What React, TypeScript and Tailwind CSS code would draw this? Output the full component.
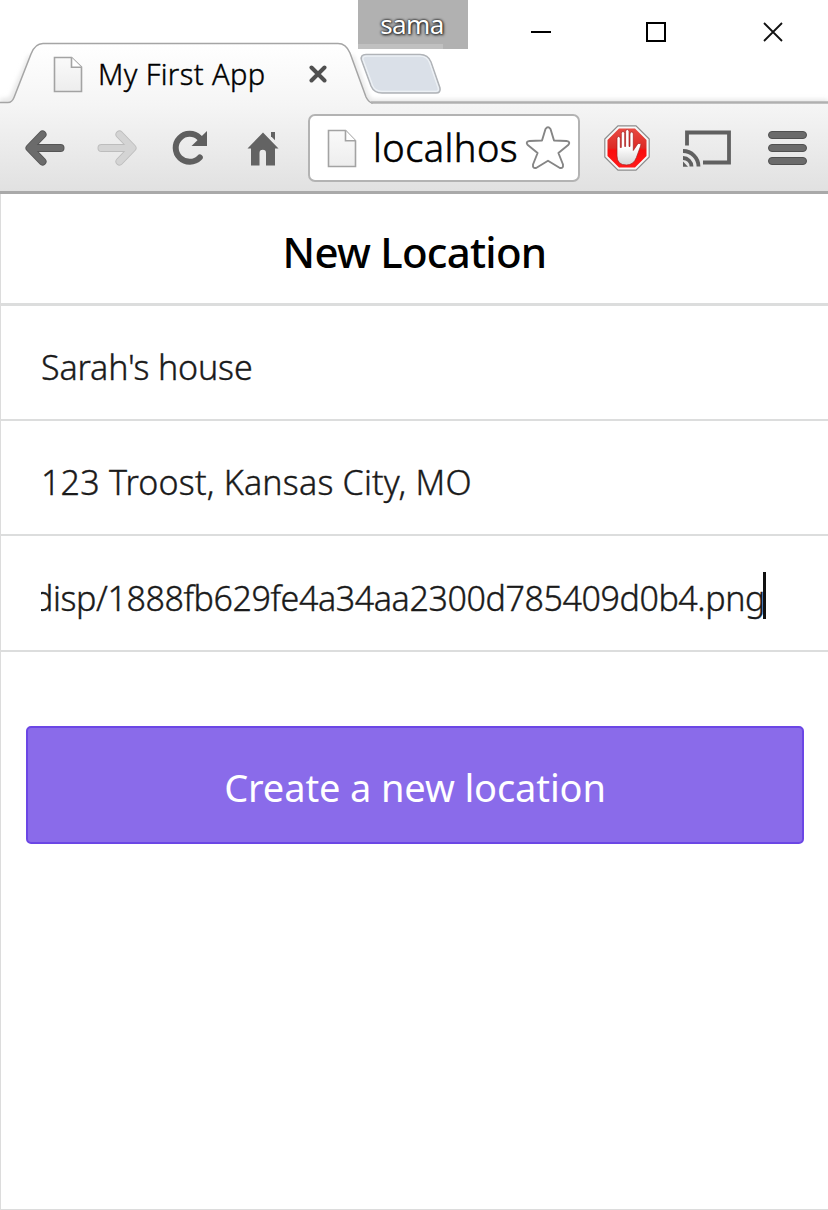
import React from "react";

function FileIcon({ className }: { className: string }) {
  return (
    <svg className={className} viewBox="0 0 30 38" preserveAspectRatio="none" fill="none">
      <defs>
        <linearGradient id="paper" x1="0" y1="0" x2="0" y2="1">
          <stop offset="0" stopColor="#fafafa" />
          <stop offset="1" stopColor="#ededed" />
        </linearGradient>
      </defs>
      <path d="M1.5 1.5H18.5L28.5 11.5V36.5H1.5Z" fill="url(#paper)" stroke="#a3a3a3" strokeWidth="1.6" />
      <path d="M18.5 1.5V11.5H28.5" fill="#fff" stroke="#a3a3a3" strokeWidth="1.6" />
    </svg>
  );
}

function ArrowIcon({ className, fill, stroke }: { className: string; fill: string; stroke: string }) {
  return (
    <svg className={className} viewBox="0 0 40 36" fill="none" strokeLinecap="round" strokeLinejoin="round">
      <path d="M17.5 4.5L4.5 18L17.5 31.5M5 18H35.5" stroke={stroke} strokeWidth="8" />
      <path d="M17.5 4.5L4.5 18L17.5 31.5M5 18H35.5" stroke={fill} strokeWidth="6.2" />
    </svg>
  );
}

function ReloadIcon() {
  return (
    <svg className="h-9 w-9" viewBox="0 0 36 36" fill="none">
      <path d="M27.5 7.8A14 14 0 1 0 27.8 27.5" stroke="#5f5f5f" strokeWidth="6" strokeLinecap="round" />
      <path d="M35 1V16H19.5Z" fill="#5f5f5f" />
    </svg>
  );
}

function HomeIcon() {
  return (
    <svg className="h-[35px] w-8" viewBox="0 0 32 35" fill="#636363">
      <path d="M16 1.5L0.5 17.5H4V34.5H12.5V22Q12.5 18.8 15.8 18.8Q19 18.8 19 22V34.5H28V17.5H31.5Z" />
      <path d="M24 1H28V9.3L24 5.2Z" />
    </svg>
  );
}

function StarIcon() {
  return (
    <svg className="h-[44px] w-[46px] shrink-0" viewBox="0 0 46 44" fill="#fff">
      <path
        d="M20.5 3Q23 -0.5 25.5 3L29 14.5L41.5 15Q46 15.8 43.2 19L33.4 27L38 38.5Q38.5 43 34.5 41.8L23 34.8L11.5 41.8Q7.5 43 8 38.5L12.6 27L2.8 19Q0 15.8 4.5 15L17 14.5Z"
        stroke="#858585"
        strokeWidth="1.9"
        strokeLinejoin="round"
      />
    </svg>
  );
}

function StopHandIcon() {
  return (
    <svg className="h-[46px] w-[46px]" viewBox="0 0 46 46">
      <defs>
        <linearGradient id="sign" x1="0" y1="0" x2="0" y2="1">
          <stop offset="0" stopColor="#e84a42" />
          <stop offset="0.5" stopColor="#dd2a25" />
          <stop offset="0.56" stopColor="#fa0d0d" />
          <stop offset="1" stopColor="#ff1a1a" />
        </linearGradient>
        <linearGradient id="palm" x1="0" y1="0" x2="0" y2="1">
          <stop offset="0.5" stopColor="#fff" />
          <stop offset="1" stopColor="#d5d5d5" />
        </linearGradient>
      </defs>
      <path d="M14 .8H32L45.2 14V32L32 45.2H14L.8 32V14Z" fill="#f8f8f8" stroke="#8c8c8c" strokeWidth="1.2" />
      <path d="M15 3.5H31L42.5 15V31L31 42.5H15L3.5 31V15Z" fill="url(#sign)" />
      <path
        d="M13 13.5Q13 11.5 14.6 11.5Q16.3 11.5 16.3 13.5V22.5H17.3V8.5Q17.3 6.5 19 6.5Q20.7 6.5 20.7 8.5V21.5H21.6V6.5Q21.6 4.5 23.3 4.5Q25 4.5 25 6.5V21.5H26V9Q26 7 27.7 7Q29.3 7 29.3 9V25.5L33.3 19.5Q34.3 18 36.2 18.6Q37.3 19.2 36.6 21L32.4 32.5Q29.5 40 22.5 40Q13 40 13 31Z"
        fill="url(#palm)"
        stroke="#a52020"
        strokeWidth=".7"
      />
    </svg>
  );
}

function CastIcon() {
  return (
    <svg className="h-[37px] w-[50px]" viewBox="0 0 50 37" fill="none" stroke="#606060">
      <path d="M5 15.5V2.5H47V32.5H21" strokeWidth="3.8" />
      <path d="M1 28A8.5 8.5 0 0 1 9.5 36.5M1 21A15.5 15.5 0 0 1 16.5 36.5" strokeWidth="3.8" />
      <path d="M1 31.5L6 36.8H1Z" fill="#606060" stroke="none" />
    </svg>
  );
}

function TabShape() {
  return (
    <svg className="absolute inset-0 h-[105px] w-[828px]" viewBox="0 0 828 105" fill="none">
      <defs>
        <linearGradient id="tab" x1="0" y1="43" x2="0" y2="105" gradientUnits="userSpaceOnUse">
          <stop offset="0" stopColor="#fff" />
          <stop offset="1" stopColor="#f5f5f5" />
        </linearGradient>
        <filter id="soft" x="-5%" y="-20%" width="110%" height="140%">
          <feGaussianBlur stdDeviation="2.5" />
        </filter>
      </defs>
      <path d="M0 101H8Q11 101 13 97L31 56M351 56L366 96Q369 102 373 102H828" stroke="#ddd" strokeWidth="4" filter="url(#soft)" />
      <path d="M0 105V102.5H8Q12 102.5 14 97.5L31 54Q35 43.5 43 43.5H338Q346 43.5 350 53L366 97Q369 103 373 103H828V105Z" fill="url(#tab)" />
      <path d="M0 102.5H8Q12 102.5 14 97.5L31 54Q35 43.5 43 43.5H338Q346 43.5 350 53L366 97Q369 103 373 103" stroke="#a5a5a5" strokeWidth="1.5" />
      <path d="M371 102.5H828" stroke="#b0b0b0" strokeWidth="2.5" />
      <path d="M366 54.5H420Q428 54.5 431 62L440 88Q441 93 436 93H382Q374 93 371 86L361.5 60Q360 54.5 366 54.5Z" fill="#dae0e8" stroke="#b0b3b7" strokeWidth="1.5" />
      <path d="M367 56.2H420Q427 56.2 429.5 62.5L438.2 88Q439 91.3 436 91.3H382Q375 91.3 372.6 85.5L363.2 60Q362 56.2 367 56.2Z" stroke="#edf1f5" strokeWidth="1.3" />
    </svg>
  );
}

function TabStrip() {
  return (
    <div className="relative h-[105px] bg-white">
      <TabShape />
      <div className="relative flex h-full justify-between">
        <div className="flex items-center pt-[43px] pl-[53px]">
          <FileIcon className="h-[37px] w-[30px]" />
          <span className="ml-[15px] w-[194px] text-[29px] leading-[40px] font-light tracking-[0.4px] whitespace-nowrap text-black [-webkit-text-stroke:0.4px_#000]">My First App</span>
          <svg className="ml-[17px] h-[18px] w-[18px]" viewBox="0 0 18 18" fill="none" stroke="#505050" strokeWidth="4" strokeLinecap="round">
            <path d="M2.5 2.5L15.5 15.5M15.5 2.5L2.5 15.5" />
          </svg>
        </div>
        <div className="flex gap-[95px] pt-[22px] pr-[45px]">
          <svg className="h-5 w-5" viewBox="0 0 20 20"><path d="M0 9H20V11H0Z" /></svg>
          <svg className="h-5 w-5" viewBox="0 0 20 20" fill="none" stroke="#000" strokeWidth="2"><path d="M1 1H19V19H1Z" /></svg>
          <svg className="ml-[2px] h-5 w-5" viewBox="0 0 20 20" stroke="#111" strokeWidth="1.8"><path d="M1 1L19 19M19 1L1 19" /></svg>
        </div>
      </div>
      <div className="absolute top-0 left-[358px] h-[49px] w-[110px] bg-[#b1b1b1] pr-[2px] text-center text-[26px] leading-[49px] tracking-[-0.6px] text-white [text-shadow:0_0_2px_#222,0_0_3px_#222,1px_1px_3px_#333]">
        <div className="absolute bottom-0 left-0 h-[5px] w-[85px] bg-[#c0c0c0]" />
        <span className="relative">sama</span>
      </div>
    </div>
  );
}

function Toolbar() {
  return (
    <div className="flex h-[89px] items-center border-b-[3px] border-[#a9a9a9] bg-linear-to-b from-[#f5f5f5] to-[#e1e1e1] pl-[25px]">
      <ArrowIcon className="h-9 w-10" fill="#6b6b6b" stroke="#555555" />
      <ArrowIcon className="ml-8 h-9 w-10 rotate-180" fill="#d4d4d4" stroke="#bdbdbd" />
      <div className="ml-[35px]"><ReloadIcon /></div>
      <div className="ml-[39px]"><HomeIcon /></div>
      <div className="ml-[29px] flex h-[68px] w-[272px] shrink-0 items-center rounded-[7px] border-2 border-[#b3b3b3] bg-white pl-[17px]">
        <FileIcon className="h-[39px] w-[30px] shrink-0" />
        <span className="ml-[16px] w-[152px] shrink-0 pb-[3px] text-[38px] leading-[46px] font-light tracking-[0.45px] whitespace-nowrap text-black [-webkit-text-stroke:0.6px_#000]">localhos</span>
        <StarIcon />
      </div>
      <div className="ml-6"><StopHandIcon /></div>
      <div className="ml-8"><CastIcon /></div>
      <div className="ml-9 flex flex-col gap-[5px]">
        <div className="h-2 w-[39px] rounded-full border border-[#505050] bg-[#6b6b6b]" />
        <div className="h-2 w-[39px] rounded-full border border-[#505050] bg-[#6b6b6b]" />
        <div className="h-2 w-[39px] rounded-full border border-[#505050] bg-[#6b6b6b]" />
      </div>
    </div>
  );
}

export default function App() {
  return (
    <div className="flex h-[1210px] w-[828px] flex-col overflow-hidden bg-white font-['Noto_Sans',sans-serif]">
      <TabStrip />
      <Toolbar />
      <main className="flex flex-1 flex-col border-b border-l border-[#dcdcdc] bg-white text-[#1a1a1a]">
        <h1 className="h-[112px] border-b-[3px] border-[#dcdddd] text-center text-[42px] leading-[115px] font-medium text-black">
          <span className="tracking-[-0.75px]">New Location</span>
        </h1>
        <div className="h-[115px] border-b-2 border-[#dcdddd] px-10 text-[34px] leading-[122px] font-light whitespace-nowrap [-webkit-text-stroke:0.4px_#1a1a1a]">
          <span className="tracking-[-0.15px]">Sarah's house</span>
        </div>
        <div className="h-[115px] border-b-2 border-[#dcdddd] px-10 text-[34px] leading-[122px] font-light whitespace-nowrap [-webkit-text-stroke:0.4px_#1a1a1a]">
          <span className="tracking-[0.2px]">123 Troost, Kansas City, MO</span>
        </div>
        <div className="flex h-[116px] items-center border-b-2 border-[#dcdddd] px-10 pt-[5px]">
          <div className="flex h-[60px] w-[724px] justify-end overflow-hidden text-[34px] leading-[64px] font-light whitespace-nowrap [-webkit-text-stroke:0.4px_#1a1a1a]">
            <span className="tracking-[-0.41px]">disp/1888fb629fe4a34aa2300d785409d0b4.png</span>
          </div>
          <div className="-ml-[2px] h-[47px] w-[3px] bg-[#111]" />
        </div>
        <button className="mt-[74px] ml-[25px] h-[118px] w-[778px] rounded-[5px] border-2 border-[#6b46e5] bg-[#8a6bea] pt-[5px] text-[38px] text-white">
          <span className="tracking-[-0.12px]">Create a new location</span>
        </button>
      </main>
    </div>
  );
}
